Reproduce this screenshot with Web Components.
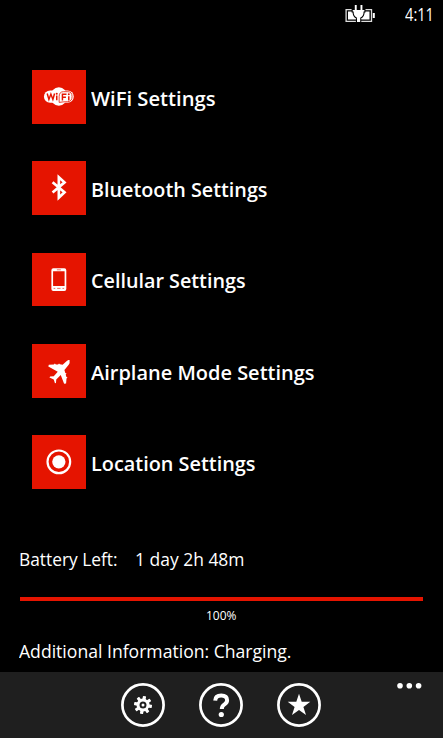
<!DOCTYPE html>
<html lang="en">
<head>
<meta charset="utf-8">
<title>Settings</title>
<style>
html,body{margin:0;height:100%;background:#000;overflow:hidden}
body{font-family:"Open Sans","Noto Sans",sans-serif;color:#fff}
</style>
</head>
<body>
<phone-screen></phone-screen>
<script>
// Single line of text stretched to a chosen width.
class FitText extends HTMLElement{
  connectedCallback(){
    const r=this.attachShadow({mode:'open'});
    r.innerHTML=`<style>:host{display:block;white-space:nowrap;line-height:24px}span{display:inline-block;transform-origin:0 50%}</style><span><slot></slot></span>`;
    const s=r.querySelector('span'),w=+this.getAttribute('width');
    this.style.width=w+'px';
    const fit=()=>{s.style.transform='none';const n=s.getBoundingClientRect().width;if(n)s.style.transform=`scaleX(${w/n})`};
    fit();document.fonts.ready.then(fit);
  }
}
customElements.define('fit-text',FitText);

const icons={
wifi:`<rect x="12" y="20.6" width="30" height="12.4" rx="6.2"/><ellipse cx="27" cy="26.700" rx="8.500" ry="9.300"/>
 <path d="M27.300 32.600v-6.200q.2-4.600 4.400-4.600h4.300q4.300 0 4.300 4.900t-4.300 5.200q-5 0-8.700.7z" fill="none" stroke="#e51400" stroke-width=".8"/>
 <g fill="none" stroke="#e51400" stroke-width="1.500"><path d="M15.300 23.600l1.700 6 2-5.400 2 5.400 1.700-6M24.900 25.700v4.700M30.600 30.600v-6.300h4.100M30.600 27.400h3.500M37 26.300v4.300"/></g><circle cx="24.900" cy="23.800" r="1" fill="#e51400"/><circle cx="37" cy="24.300" r="1" fill="#e51400"/>`,
bluetooth:`<path d="M20.700 21.300l12 10.200-5.700 5.400V16.300l5.700 5.200-12 10.200" fill="none" stroke="#fff" stroke-width="2.700"/>`,
phone:`<path fill-rule="evenodd" d="M21.500 15.400h11a2 2 0 0 1 2 2v18.800a2 2 0 0 1-2 2h-11a2 2 0 0 1-2-2V17.400a2 2 0 0 1 2-2zM21.200 18.300v14.800h11.600V18.300z"/><g stroke="#e51400" stroke-width="1" opacity=".6"><path d="M25 16.900h4M21.700 35.600h1.700M25.300 35.600h3.400M30.600 35.600h1.700"/></g>`,
plane:`<path d="M37.600 17.500c.4.900-.5 2.400-1.700 3.800l-3.500 4.200.9 3.100 1.300.5-.9 1.100.6 2.200 1.200.7-1 1.100-.4 5-2 .3-3.400-8.900-4.500 4.500-.3 3.500-1 .4-1.200-3.900-4.300-2.100.6-1 3.700-.2 4-4.500-9.500-5.200.5-1.800 5.100-.3 1-.9 1 .9 2.200-.1 1-.8.8.7 2.800.4 3.900-3.500c1.200-1 2.400-1.500 3.100-1.200z" transform="translate(.2 .6)"/>`,
location:`<circle cx="27" cy="27" r="11.400" fill="none" stroke="#fff" stroke-width="2.200"/><circle cx="27" cy="27" r="6.700"/>`
};
class SettingRow extends HTMLElement{
  connectedCallback(){
    this.attachShadow({mode:'open'}).innerHTML=`<style>
    :host{display:flex;height:53.700px;align-items:center;font-size:20.400px;font-weight:600}
    .tile{width:53.700px;height:53.700px;background:#e51400;flex:none}
    svg{display:block;width:100%;height:100%;fill:#fff}
    .label{margin-left:4.900px;padding-top:2px}
    </style><div class="tile"><svg viewBox="0 0 54 54">${icons[this.getAttribute('icon')]}</svg></div><div class="label"><slot></slot></div>`;
  }
}
customElements.define('setting-row',SettingRow);

class StatusBar extends HTMLElement{
  connectedCallback(){
    this.attachShadow({mode:'open'}).innerHTML=`<style>:host{display:flex;justify-content:flex-end;height:30px;padding-right:9px;box-sizing:border-box;font-size:17.500px}svg{display:block;margin-right:28px}fit-text{margin-top:2px}</style>
    <svg width="32" height="28" viewBox="345 0 32 28"><path d="M346.100 9.600h25.400v11.800h-25.400z" fill="none" stroke="#ddd" stroke-width="1.300"/><path fill="#fff" d="M348 11.500h21.500v8H348zM372.800 13h2v5h-2z"/><path d="M354.800 5h1.900v5h3.800V5h1.900v5h2v1.500h-.8q0 5-3.400 6.200v4.200h-3.200v-4.200q-3.400-1.200-3.400-6.200h-.9V10h2.100z" fill="#fff" stroke="#000" stroke-width="2.200" paint-order="stroke"/></svg>
    <fit-text width="29">4:11</fit-text>`;
  }
}
customElements.define('status-bar',StatusBar);

class BatteryPanel extends HTMLElement{
  connectedCallback(){
    this.attachShadow({mode:'open'}).innerHTML=`<style>
    :host{display:block;font-size:18px}
    .line{display:flex;padding-left:18.500px;gap:17.500px}
    .bar{height:4px;background:#e51400;margin:26px 20px 0}
    .pct{display:flex;justify-content:center;font-size:12.500px;margin-top:3px}
    .info{margin-top:11px}
    </style>
    <div class="line"><fit-text width="98.500">Battery Left:</fit-text><fit-text width="109.500">1 day 2h 48m</fit-text></div>
    <div class="bar"></div>
    <div class="pct"><fit-text width="30.500">100%</fit-text></div>
    <div class="line info"><fit-text width="272.500">Additional Information: Charging.</fit-text></div>`;
  }
}
customElements.define('battery-panel',BatteryPanel);

class RoundButton extends HTMLElement{
  connectedCallback(){
    const k=this.getAttribute('icon');
    let g='';
    if(k==='gear'){
      for(let i=0;i<8;i++)g+=`<rect x="20.400" y="13" width="3.200" height="5" rx=".7" transform="rotate(${i*45+10} 22 22)"/>`;
      g+='<circle cx="22" cy="22" r="5" fill="none" stroke="#fff" stroke-width="3"/><circle cx="22" cy="22" r="1.500"/>';
    }else if(k==='help'){
      g='<path d="M16.200 17.600q.2-5 6-5 5.900 0 5.900 4.700 0 2.400-2.600 4.100-2.700 1.600-2.700 4.700" fill="none" stroke="#fff" stroke-width="4"/><circle cx="22.300" cy="31.500" r="2.600"/>';
    }else g='<path d="M22 10.700l2.700 8.100h8.600l-6.900 5.100 2.600 8.200-7-5-7 5 2.600-8.200-6.900-5.100h8.600z"/>';
    this.attachShadow({mode:'open'}).innerHTML=`<style>:host{display:block;width:44px;height:44px}svg{display:block;fill:#fff}</style><svg width="44" height="44"><circle cx="22" cy="22" r="20.600" fill="none" stroke="#fff" stroke-width="2.700"/>${g}</svg>`;
  }
}
customElements.define('round-button',RoundButton);

class AppBar extends HTMLElement{
  connectedCallback(){
    this.attachShadow({mode:'open'}).innerHTML=`<style>:host{display:grid;grid-template-columns:1fr auto 1fr;height:66px;background:#1f1f1f}
    .buttons{display:flex;gap:33.700px;padding-top:11.300px;margin:0 .5px 0 -.5px}svg{justify-self:end;margin:10px 20px 0 0;fill:#fff}</style>
    <span></span><div class="buttons"><slot></slot></div><svg width="27" height="8"><circle cx="4" cy="3.700" r="2.800"/><circle cx="13.300" cy="3.700" r="2.800"/><circle cx="22.600" cy="3.700" r="2.800"/></svg>`;
  }
}
customElements.define('app-bar',AppBar);

class PhoneScreen extends HTMLElement{
  connectedCallback(){
    this.attachShadow({mode:'open'}).innerHTML=`<style>
    :host{display:flex;flex-direction:column;width:443px;height:738px;background:#000}
    .list{display:flex;flex-direction:column;gap:37.600px;padding:40px 0 0 32px}
    battery-panel{margin-top:58px}
    app-bar{margin-top:auto}
    </style>
    <status-bar></status-bar>
    <div class="list">
    <setting-row icon="wifi"><fit-text width="124.500">WiFi Settings</fit-text></setting-row>
    <setting-row icon="bluetooth"><fit-text width="176.500">Bluetooth Settings</fit-text></setting-row>
    <setting-row icon="phone"><fit-text width="154.500">Cellular Settings</fit-text></setting-row>
    <setting-row icon="plane"><fit-text width="223.500">Airplane Mode Settings</fit-text></setting-row>
    <setting-row icon="location"><fit-text width="164.500">Location Settings</fit-text></setting-row>
    </div>
    <battery-panel></battery-panel>
    <app-bar><round-button icon="gear"></round-button><round-button icon="help"></round-button><round-button icon="star"></round-button></app-bar>`;
  }
}
customElements.define('phone-screen',PhoneScreen);
</script>
</body>
</html>
